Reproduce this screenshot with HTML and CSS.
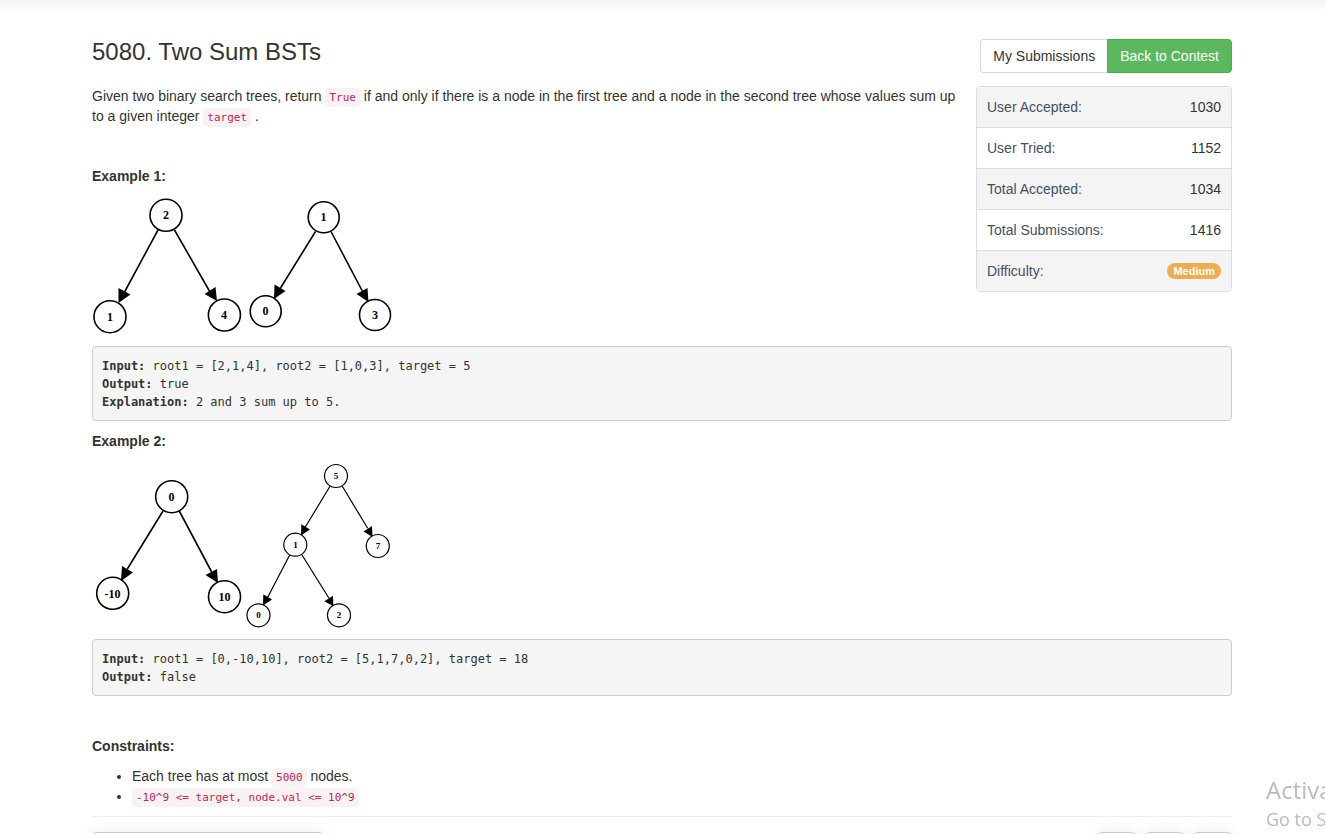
FILE: index.html
```html
<!DOCTYPE html>
<html lang="en">
<head>
<meta charset="utf-8">
<title>5080. Two Sum BSTs</title>
<link rel="stylesheet" href="styles.css">
</head>
<body>
<div class="nav-shadow"></div>
<main class="container">
  <aside class="sidebar">
    <div class="btn-group">
      <a class="btn btn-default" href="#submissions">My Submissions</a>
      <a class="btn btn-success" href="#contest">Back to Contest</a>
    </div>
    <ul class="stats">
      <li><span>User Accepted:</span><span class="value">1030</span></li>
      <li><span>User Tried:</span><span class="value">1152</span></li>
      <li><span>Total Accepted:</span><span class="value">1034</span></li>
      <li><span>Total Submissions:</span><span class="value">1416</span></li>
      <li><span>Difficulty:</span><span class="badge">Medium</span></li>
    </ul>
  </aside>

  <h3 class="title">5080. Two Sum BSTs</h3>

  <section class="question">
    <p>Given two binary search trees, return <code>True</code> if and only if there is a node in the first tree and a node in the second tree whose values sum up to a given integer <code>target</code> .</p>
    <p>&nbsp;</p>
    <p><strong>Example 1:</strong></p>
    <div class="trees">
      <svg class="tree" width="154" height="140" viewBox="0 0 154 140">
        <path d="M66 34 32 97M82.5 34 118 96"/>
        <path class="arrow" d="M26.5 92 38.5 98.5 26.5 107ZM112.5 98 123.5 91 125 105Z"/>
        <circle cx="74" cy="19.3" r="16"/><circle cx="18" cy="120.7" r="16"/><circle cx="132.4" cy="119" r="16"/>
        <text x="74" y="23">2</text><text x="18" y="125">1</text><text x="132" y="123">4</text>
      </svg>
      <svg class="tree" width="154" height="140" viewBox="0 0 154 140">
        <path d="M69.5 35.5 34.5 92M85 35.5 116.3 95"/>
        <path class="arrow" d="M28.5 88.5 39.5 95 28 103ZM110.5 98 121.5 92 122.5 106Z"/>
        <circle cx="77.7" cy="21.3" r="15.5"/><circle cx="19.7" cy="115.3" r="15.5"/><circle cx="129" cy="119" r="15.5"/>
        <text x="77.5" y="25">1</text><text x="19.5" y="119">0</text><text x="129" y="123">3</text>
      </svg>
    </div>
    <pre><strong>Input: </strong>root1 = [2,1,4], root2 = [1,0,3], target = 5
<strong>Output: </strong>true
<strong>Explanation: </strong>2 and 3 sum up to 5.</pre>
    <p><strong>Example 2:</strong></p>
    <div class="trees">
      <svg class="tree" width="154" height="168" viewBox="0 0 154 168">
        <path d="M71 50 35.3 108M87.3 50 119.7 111"/>
        <path class="arrow" d="M30 105 41 111.5 29 120ZM113.5 114 125 108 126 122Z"/>
        <circle cx="79.7" cy="35.7" r="16"/><circle cx="20.7" cy="132.3" r="16"/><circle cx="132.5" cy="135.7" r="16"/>
        <text x="79.5" y="40">0</text><text x="20.5" y="137">-10</text><text x="132.5" y="140">10</text>
      </svg>
      <svg class="tree tree-small" width="154" height="168" viewBox="0 0 154 168">
        <path d="M84 25.3 59.3 66M96.3 25.3 121.7 67.3M43.7 94 21.7 136.3M56 94 83 137.3"/>
        <path class="arrow" d="M55.3 63.3 64 68.5 55 74.5ZM117.5 70.5 126 65 126.5 76ZM17.3 133.3 26 138.5 17 144.5ZM78.3 140.3 87 134.7 87.3 145.3Z"/>
        <circle cx="90" cy="15" r="11.5"/><circle cx="49.3" cy="83.7" r="11.5"/><circle cx="131.8" cy="85" r="11.5"/><circle cx="12.5" cy="154.3" r="11.5"/><circle cx="93" cy="154.3" r="11.5"/>
        <text x="90" y="18">5</text><text x="49.5" y="87">1</text><text x="132" y="88">7</text><text x="12.5" y="157">0</text><text x="93" y="157">2</text>
      </svg>
    </div>
    <pre><strong>Input: </strong>root1 = [0,-10,10], root2 = [5,1,7,0,2], target = 18
<strong>Output: </strong>false</pre>
    <p>&nbsp;</p>
    <p><strong>Constraints:</strong></p>
    <ul class="constraints">
      <li>Each tree has at most <code>5000</code> nodes.</li>
      <li><code>-10^9 &lt;= target, node.val &lt;= 10^9</code></li>
    </ul>
  </section>

  <div class="editor-bar">
    <select class="language" aria-label="Language"><option>C++</option></select>
    <div class="tools">
      <button class="tool" type="button" aria-label="Reset"></button>
      <button class="tool" type="button" aria-label="Information"></button>
      <button class="tool" type="button" aria-label="Settings"></button>
    </div>
  </div>
</main>
<div class="watermark">
  <div class="watermark-title">Activate Windows</div>
  <div class="watermark-text">Go to Settings to activate Windows.</div>
</div>
</body>
</html>
```
FILE: styles.css
```css
* { box-sizing: border-box; }

html, body { height: 100%; overflow: hidden; }

body {
  margin: 0;
  background: #fff;
  color: #333;
  font: 14px/20px "Liberation Sans", Arial, sans-serif;
}

.nav-shadow {
  height: 13px;
  background: linear-gradient(#f4f4f4, #fff);
}

.container {
  width: calc(100% - 30px);
  max-width: 1141px;
  margin: 0 auto;
  padding: 26px 1px 0 0;
}

.sidebar {
  float: right;
  width: 256px;
  margin-left: 16px;
}

.btn-group { display: flex; justify-content: flex-end; }

.btn {
  padding: 6px 12px;
  border: 1px solid #ddd;
  border-radius: 4px;
  color: #333;
  text-decoration: none;
  white-space: nowrap;
}

.btn-default {
  border-right: 0;
  border-radius: 4px 0 0 4px;
}

.btn-success {
  border-color: #4cae4c;
  border-radius: 0 4px 4px 0;
  background: #5cb85c;
  color: #fff;
}

.stats {
  margin: 13px 0 0;
  padding: 0;
  border: 1px solid #ddd;
  border-radius: 4px;
  overflow: hidden;
  list-style: none;
}

.stats li {
  display: flex;
  justify-content: space-between;
  align-items: center;
  padding: 10px;
  color: #444f66;
}

.stats li + li { border-top: 1px solid #ddd; }
.stats li:nth-child(odd) { background: #f4f4f4; }
.stats .value { color: #333; }

.badge {
  padding: 0 6px;
  border-radius: 8px;
  background: #f0ad4e;
  color: #fff;
  font-size: 11px;
  font-weight: bold;
  line-height: 16px;
}

.title {
  margin: 0;
  font-size: 24px;
  font-weight: normal;
  line-height: 26px;
}

.question { padding-top: 21px; }

p { margin: 0 0 10px; }

code, pre { font-family: "DejaVu Sans Mono", monospace; font-size: 12px; }

code {
  padding: 3px 4px;
  border-radius: 4px;
  background: #f9f2f4;
  color: #c7254e;
  font-size: 11px;
  line-height: 14px;
}

pre {
  margin: 0 0 10px;
  padding: 10px 9px 9px;
  border: 1px solid #ccc;
  border-radius: 4px;
  background: #f5f5f5;
  line-height: 18px;
  overflow: hidden;
}

.trees { display: flex; margin-bottom: 10px; }

.tree {
  fill: none;
  stroke: #000;
  stroke-width: 1.6;
}

.tree .arrow { fill: #000; stroke: none; }

.tree text {
  fill: #000;
  stroke: none;
  font: bold 12px "Liberation Serif", serif;
  text-anchor: middle;
}

.tree-small { stroke-width: 1.2; }
.tree-small text { font-size: 9px; }

.constraints { margin: 0; padding-left: 40px; }

.editor-bar {
  display: flex;
  justify-content: space-between;
  margin-top: 10px;
  padding-top: 15px;
  border-top: 1px solid #eee;
}

.language, .tool {
  height: 34px;
  border: 1px solid #ccc;
  border-radius: 4px;
  background: #fff;
  box-shadow: 0 0 16px rgba(0, 0, 0, 0.08);
}

.language { width: 231px; }
.tools { display: flex; gap: 10px; }
.tool { width: 38px; }

.watermark {
  position: fixed;
  left: calc(100% - 59px);
  bottom: 1px;
  color: #bbb;
  font-family: "Open Sans", sans-serif;
  white-space: nowrap;
}

.watermark-title { font-size: 24px; line-height: 30px; }
.watermark-text { font-size: 18px; line-height: 28px; }
```
